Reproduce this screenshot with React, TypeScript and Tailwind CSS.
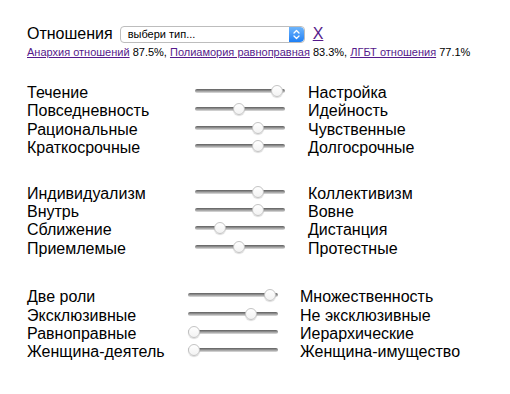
import React from 'react';

type Row = { left: string; right: string; value: number };

const groups: { label: number; rows: Row[]; mt: string }[] = [
  {
    label: 168,
    mt: 'mt-[25px]',
    rows: [
      { left: 'Течение', right: 'Настройка', value: 1 },
      { left: 'Повседневность', right: 'Идейность', value: 0.5 },
      { left: 'Рациональные', right: 'Чувственные', value: 0.75 },
      { left: 'Краткосрочные', right: 'Долгосрочные', value: 0.75 },
    ],
  },
  {
    label: 168,
    mt: 'mt-[27px]',
    rows: [
      { left: 'Индивидуализм', right: 'Коллективизм', value: 0.75 },
      { left: 'Внутрь', right: 'Вовне', value: 0.75 },
      { left: 'Сближение', right: 'Дистанция', value: 0.25 },
      { left: 'Приемлемые', right: 'Протестные', value: 0.5 },
    ],
  },
  {
    label: 161,
    mt: 'mt-[30px]',
    rows: [
      { left: 'Две роли', right: 'Множественность', value: 1 },
      { left: 'Эксклюзивные', right: 'Не эксклюзивные', value: 0.75 },
      { left: 'Равноправные', right: 'Иерархические', value: 0 },
      { left: 'Женщина-деятель', right: 'Женщина-имущество', value: 0 },
    ],
  },
];

const Slider = ({ value }: { value: number }) => (
  <div className="relative h-full w-[90px] shrink-0">
    <div className="absolute left-0 right-0 top-[5px] h-[4px] rounded-full bg-gradient-to-b from-[#5e5e5e] via-[#9a9a9a] to-[#e0e0e0]" />
    <div
      className="absolute top-[1px] h-[12px] w-[12px] rounded-full border border-[#c4c4c4] bg-gradient-to-b from-white to-[#f2f2f2] shadow-[0_1px_1px_rgba(0,0,0,0.15)]"
      style={{ left: Math.round(value * 76) }}
    />
  </div>
);

const Stepper = () => (
  <div className="flex h-full w-[15px] items-center justify-center rounded-r-[4px] bg-gradient-to-b from-[#6db5fb] to-[#1c7ff5]">
    <svg width="7" height="11" viewBox="0 0 7 11" fill="none" stroke="white" strokeWidth="1.3" strokeLinecap="round" strokeLinejoin="round">
      <path d="M1 4 L3.5 1.5 L6 4" />
      <path d="M1 7 L3.5 9.5 L6 7" />
    </svg>
  </div>
);

export default function App() {
  return (
    <div className="min-h-screen bg-white pl-[27px] pt-[25px] text-black" style={{ fontFamily: '"Liberation Sans", Arial, sans-serif' }}>
      <div className="flex h-[18px] items-center">
        <span className="text-[16px] leading-[18px]">Отношения</span>
        <div className="ml-[7px] flex h-[17px] w-[185px] items-stretch overflow-hidden rounded-[4px] border border-[#bdbdbd] bg-white">
          <span className="flex-1 pl-[7px] text-[11px] leading-[15px]">выбери тип...</span>
          <Stepper />
        </div>
        <a className="ml-[8px] text-[16px] leading-[18px] text-[#551a8b] underline">X</a>
      </div>
      <div className="mt-[3px] text-[11px] leading-[13px]">
        <a className="text-[#551a8b] underline">Анархия отношений</a> 87.5%,{' '}
        <a className="text-[#551a8b] underline">Полиамория равноправная</a> 83.3%,{' '}
        <a className="text-[#551a8b] underline">ЛГБТ отношения</a> 77.1%
      </div>
      {groups.map((g, gi) => (
        <div key={gi} className={g.mt}>
          {g.rows.map((r) => (
            <div key={r.left} className="flex h-[18.4px] text-[16px] leading-[18.4px]">
              <span className="shrink-0" style={{ width: g.label }}>
                {r.left}
              </span>
              <Slider value={r.value} />
              <span className={gi === 2 ? 'ml-[22px]' : 'ml-[23px]'}>{r.right}</span>
            </div>
          ))}
        </div>
      ))}
    </div>
  );
}
